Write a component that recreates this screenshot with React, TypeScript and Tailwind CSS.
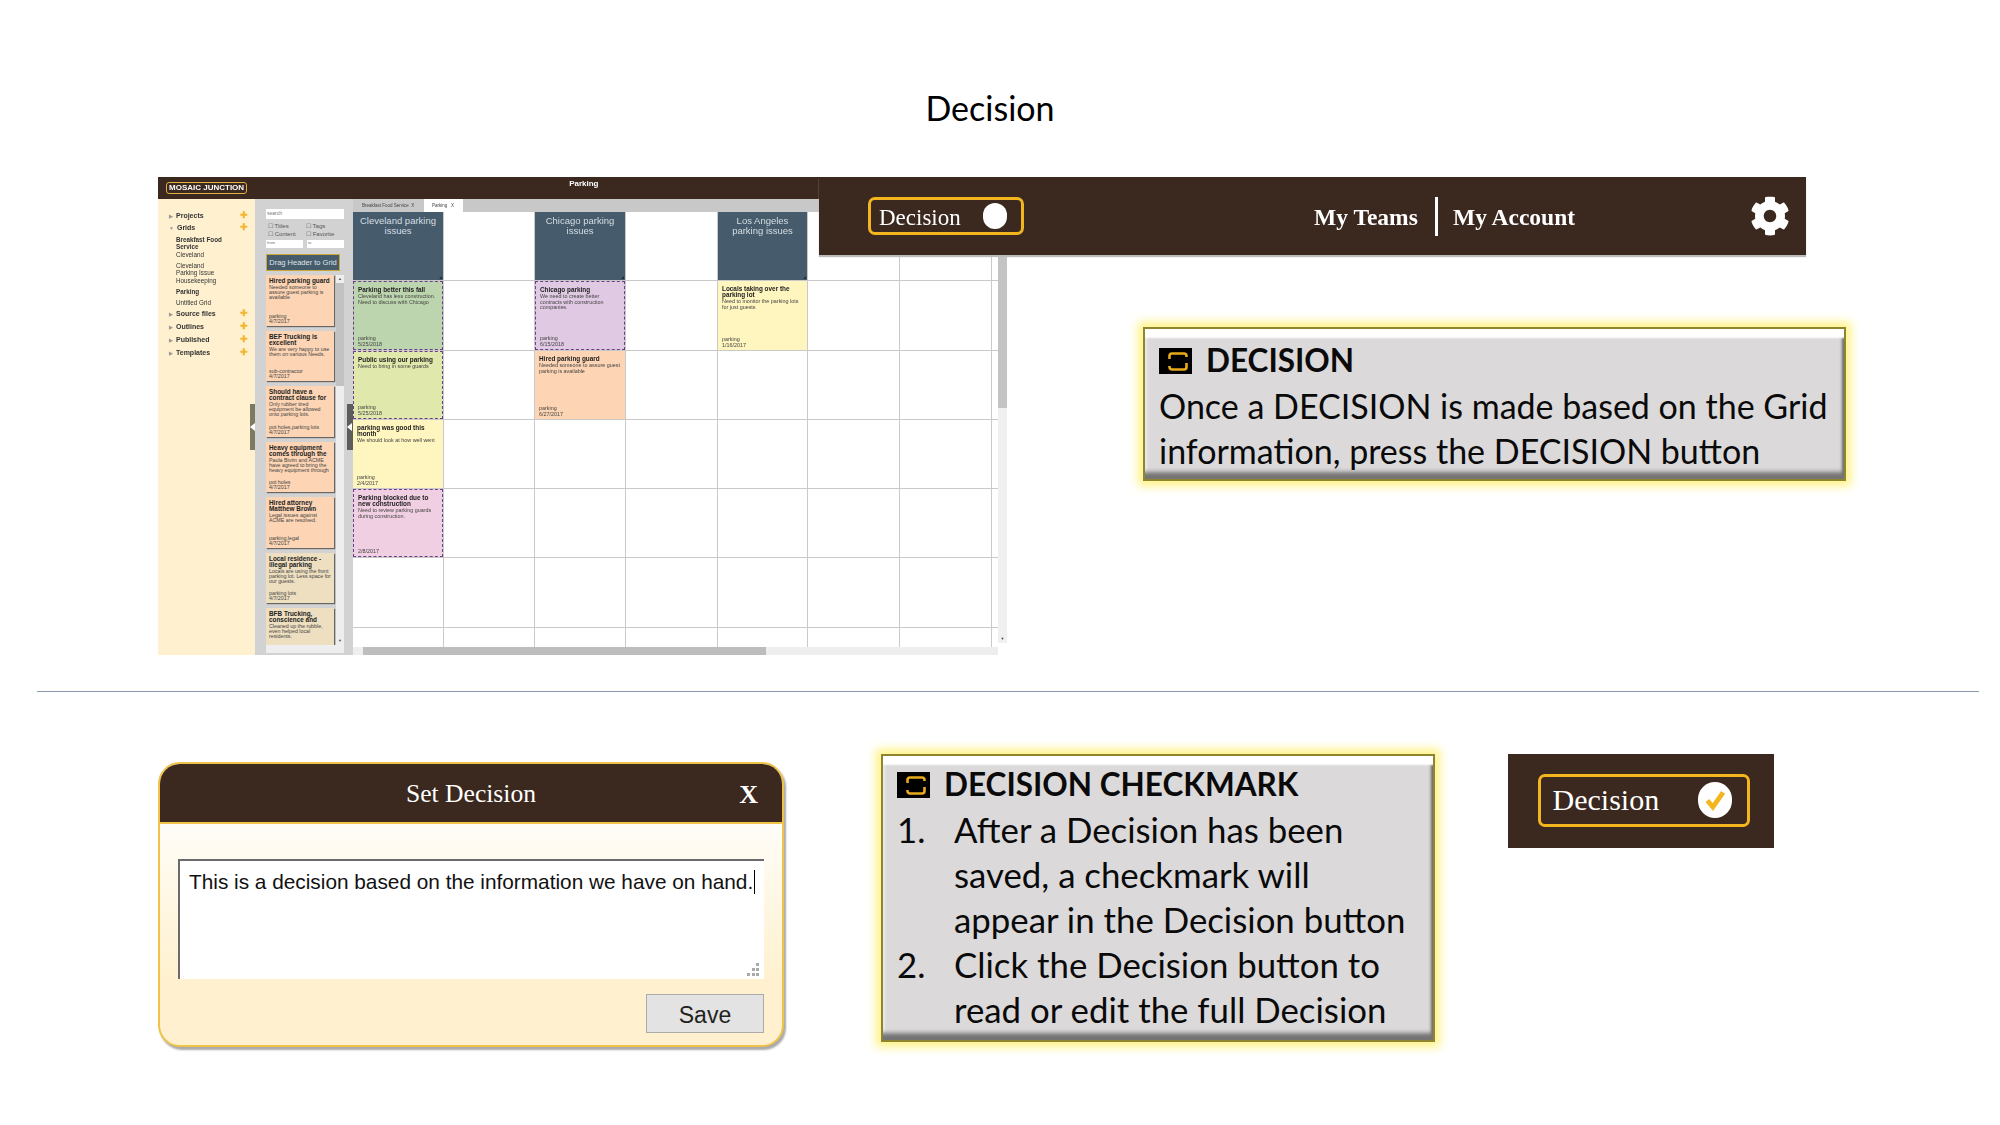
import type { ReactNode } from "react";
import { FaCog } from "react-icons/fa";

const sans = "font-['Liberation_Sans',sans-serif]";

const sideItems = [
  { label: "Projects", head: true, open: false, h: "h-[12px]" },
  { label: "Grids", head: true, open: true, h: "h-[12px]" },
  { label: "Breakfast Food Service", bold: true, h: "h-[15px]" },
  { label: "Cleveland", h: "h-[11px]" },
  { label: "Cleveland Parking Issue", h: "h-[15px]" },
  { label: "Housekeeping", h: "h-[11px]" },
  { label: "Parking", bold: true, h: "h-[11px]" },
  { label: "Untitled Grid", h: "h-[11px]" },
  { label: "Source files", head: true, h: "h-[13px]" },
  { label: "Outlines", head: true, h: "h-[13px]" },
  { label: "Published", head: true, h: "h-[13px]" },
  { label: "Templates", head: true, h: "h-[13px]" },
];

const listCards = [
  { title: "Hired parking guard", body: "Needed someone to assure guest parking is available", tag: "parking", date: "4/7/2017", bg: "bg-[#fdd5b4]" },
  { title: "BEF Trucking is excellent", body: "We are very happy to use them on various Needs.", tag: "sub-contractor", date: "4/7/2017", bg: "bg-[#fdd5b4]" },
  { title: "Should have a contract clause for", body: "Only rubber tired equipment be allowed onto parking lots.", tag: "pot holes,parking lots", date: "4/7/2017", bg: "bg-[#fdd5b4]" },
  { title: "Heavy equipment comes through the", body: "Paula Bivim and ACME have agreed to bring the heavy equipment through", tag: "pot holes", date: "4/7/2017", bg: "bg-[#fdd5b4]" },
  { title: "Hired attorney Matthew Brown", body: "Legal issues against ACME are resolved.", tag: "parking,legal", date: "4/7/2017", bg: "bg-[#fdd5b4]" },
  { title: "Local residence - illegal parking", body: "Locals are using the front parking lot. Less space for our guests.", tag: "parking lots", date: "4/7/2017", bg: "bg-[#eedfc0]" },
  { title: "BFB Trucking, conscience and", body: "Cleaned up the rubble, even helped local residents.", tag: "", date: "", bg: "bg-[#eedfc0]" },
];

type Note = { title: string; body: string; tag?: string; date: string; bg: string; dashed?: boolean };

const notes: Record<string, Note> = {
  "1-0": { title: "Parking better this fall", body: "Cleveland has less construction. Need to discuss with Chicago", tag: "parking", date: "5/25/2018", bg: "bg-[#bdd5ae]", dashed: true },
  "2-0": { title: "Public using our parking", body: "Need to bring in some guards", tag: "parking", date: "5/25/2018", bg: "bg-[#e0e8ab]", dashed: true },
  "3-0": { title: "parking was good this month", body: "We should look at how well went", tag: "parking", date: "2/4/2017", bg: "bg-[#fff5bf]" },
  "4-0": { title: "Parking blocked due to new construction", body: "Need to review parking guards during construction.", date: "2/8/2017", bg: "bg-[#f1cfe3]", dashed: true },
  "1-2": { title: "Chicago parking", body: "We need to create better contracts with construction companies.", tag: "parking", date: "6/15/2018", bg: "bg-[#e0c9e3]", dashed: true },
  "2-2": { title: "Hired parking guard", body: "Needed someone to assure guest parking is available", tag: "parking", date: "6/27/2017", bg: "bg-[#fdd5b4]" },
  "1-4": { title: "Locals taking over the parking lot", body: "Need to monitor the parking lots for just guests", tag: "parking", date: "1/16/2017", bg: "bg-[#fff5bf]" },
};

const headers: Record<number, string> = {
  0: "Cleveland parking issues",
  2: "Chicago parking issues",
  4: "Los Angeles parking issues",
};

const rowHeights = ["h-[69px]", "h-[70px]", "h-[69px]", "h-[69px]", "h-[69px]", "h-[70px]", "h-[19px]"];
const colWidths = [91, 91, 91, 92, 90, 92, 92, 6];

function DecisionButton({ done }: { done?: boolean }) {
  return (
    <div
      className={`flex h-full w-full items-center justify-between rounded-[7px] border-[3px] border-[#f3b61f] ${done ? "pl-[12px] pr-[15px]" : "pl-[8px] pr-[14px]"}`}
    >
      <span className={`font-['Liberation_Serif',serif] leading-none text-white ${done ? "text-[30px]" : "pt-[2px] text-[23px]"}`}>Decision</span>
      <span className={`flex items-center justify-center rounded-full bg-white blur-[0.5px] ${done ? "h-[36px] w-[34px]" : "h-[26px] w-[24px]"}`}>
        {done && (
          <svg viewBox="0 0 24 24" className="h-[26px] w-[26px]">
            <path d="M5 12.5l5 6L19.5 5" fill="none" stroke="#f3b61f" strokeWidth="4.5" />
          </svg>
        )}
      </span>
    </div>
  );
}

function DecisionIcon() {
  return (
    <svg viewBox="0 0 33 26" className="h-[26px] w-[33px] shrink-0">
      <rect width="33" height="26" fill="#000" />
      <path
        d="M10.5 11V8A2.5 2.5 0 0 1 13 5.5h12A2.5 2.5 0 0 1 27.5 8v1M27.5 15v4a2.5 2.5 0 0 1-2.5 2.5H13a2.5 2.5 0 0 1-2.5-2.5v-1"
        fill="none"
        stroke="#e8ab1a"
        strokeWidth="2.6"
      />
    </svg>
  );
}

function Callout({ className, children }: { className: string; children: ReactNode }) {
  return (
    <div
      className={`${className} shrink-0 border-[2px] border-[#8f8430] bg-[#dbd9da] font-['Lato',sans-serif] leading-[45px] text-[#0a0a0a] shadow-[inset_0_12px_2px_-3px_#fff,inset_0_-10px_4px_-3px_#747474,inset_-4px_0_3px_-2px_#666,inset_3px_0_2px_-1px_#eee,0_0_9px_5px_#fff385]`}
    >
      {children}
    </div>
  );
}

function AppShot() {
  return (
    <div className={`${sans} relative w-[849px] text-black`}>
      <div className="flex h-[22px] w-full items-center bg-[#3b281e] pl-[8px] blur-[0.3px]">
        <span className="rounded-[3px] border border-[#e0b040] px-[2px] text-[8px] font-bold leading-[10px] text-white">MOSAIC JUNCTION</span>
        <span className="ml-[322px] -translate-y-[4px] text-[8px] font-bold text-white">Parking</span>
      </div>

      <div className="flex h-[456px] blur-[0.35px]">
        <div className="flex w-[97px] shrink-0 flex-col bg-[#fff1cf] pt-[13px] leading-[7px] text-[#333]">
          {sideItems.map((item) => (
            <div
              key={item.label}
              className={`${item.h} flex w-full items-start ${item.head ? "pl-[11px] pr-[7px] text-[7px] font-bold" : "pl-[18px] pr-[32px] text-[6.3px]"} ${item.bold ? "font-bold" : ""}`}
            >
              {item.head && <span className="mr-[3px] mt-[1px] text-[5px] leading-[6px] text-[#999]">{item.open ? "▼" : "▶"}</span>}
              <span className="flex-1">{item.label}</span>
              {item.head && <span className="text-[9px] leading-[7px] text-[#f2b632]">✚</span>}
            </div>
          ))}
        </div>

        <div className="relative flex w-[98px] shrink-0 flex-col bg-[#d2d2d2] pl-[11px] pr-[9px] pt-[10px]">
          <div className="flex h-[10px] items-center bg-white pl-[1px] text-[5px] text-[#777]">search</div>
          <div className="mt-[3px] grid grid-cols-2 pl-[2px] text-[6px] leading-[8px] text-[#555]">
            <span>☐ Titles</span><span>☐ Tags</span><span>☐ Content</span><span>☐ Favorite</span>
          </div>
          <div className="mt-[2px] flex justify-between">
            <div className="h-[8px] w-[37px] bg-white pl-[1px] text-[4px] text-[#777]">from</div>
            <div className="h-[8px] w-[37px] bg-white pl-[1px] text-[4px] text-[#777]">to</div>
          </div>
          <div className="mt-[6px] flex h-[17px] w-[74px] items-center justify-center border border-[#c9a83a] bg-[#465b6b] text-[7.5px] text-[#dfe6ea]">Drag Header to Grid</div>

          <div className="mt-[4px] flex h-[370px] overflow-hidden">
            <div className="flex w-[68px] shrink-0 flex-col gap-[5px]">
              {listCards.map((card) => (
                <div key={card.title} className={`${card.bg} flex h-[50.5px] shrink-0 flex-col px-[3px] pt-[3px] text-[5.3px] leading-[5px] text-[#444] shadow-[1px_1px_1px_#666]`}>
                  <div className="text-[6.4px] font-bold leading-[6px] text-[#222]">{card.title}</div>
                  <div className="mt-[1px] flex-1">{card.body}</div>
                  <div>{card.tag}</div>
                  <div className="pb-[2px]">{card.date}</div>
                </div>
              ))}
            </div>
            <div className="ml-[2px] flex w-[8px] shrink-0 flex-col bg-[#eeeeee] text-center text-[4px] leading-[8px] text-[#555]">
              <div className="h-[8px]">▲</div>
              <div className="h-[103px] bg-[#c2c2c2]" />
              <div className="mt-auto h-[8px]">▼</div>
            </div>
          </div>
          <div className="h-[8px] w-[78px] bg-[#eeeeee]" />
          <div className="absolute -left-[5px] top-[205px] flex h-[46px] w-[5px] items-center bg-[#7d7a62]">
            <span className="h-0 w-0 border-y-[4px] border-r-[5px] border-y-transparent border-r-white" />
          </div>
          <div className="absolute right-0 top-[205px] flex h-[46px] w-[6px] items-center bg-[#5d5d5d]">
            <span className="h-0 w-0 border-y-[4px] border-r-[5px] border-y-transparent border-r-white" />
          </div>
        </div>

        <div className="flex w-[654px] shrink-0 flex-col">
          <div className="flex h-[13px] bg-[#c8c8c8] text-[4.5px] leading-[13px] text-[#444]">
            <span className="w-[71px] pl-[9px]">Breakfast Food Service &nbsp;X</span>
            <span className="w-[39px] bg-white pl-[8px]">Parking &nbsp;&nbsp;X</span>
          </div>
          <div className="flex h-[435px]">
            <div className="w-[645px] shrink-0">
              {rowHeights.map((rowHeight, row) => (
                <div key={row} className={`flex ${rowHeight}`}>
                  {colWidths.map((width, col) => {
                    const note = notes[`${row}-${col}`];
                    const head = row === 0 ? headers[col] : undefined;
                    return (
                      <div
                        key={col}
                        style={{ width }}
                        className={`shrink-0 border-[#c9c9c9] ${col < 7 ? "border-r" : ""} ${row < 6 ? "border-b" : ""}`}
                      >
                        {head && (
                          <div className="relative flex h-full w-full justify-center bg-[#465b6b] px-[5px] pt-[4px] text-center text-[9.5px] leading-[9.5px] text-[#d5dee3]">
                            {head}
                            <span className="absolute bottom-[1px] right-[1px] h-0 w-0 border-b-[3px] border-l-[3px] border-b-[#1f2d38] border-l-transparent" />
                          </div>
                        )}
                        {note && (
                          <div
                            className={`${note.bg} ${note.dashed ? "border-[1.5px] border-dashed border-[#6b3f8a]" : ""} flex h-full w-full flex-col px-[4px] pb-[2px] pt-[5px] text-[5.4px] leading-[5.5px] text-[#444]`}
                          >
                            <div className="text-[6.4px] font-bold leading-[6px] text-[#222]">{note.title}</div>
                            <div className="mt-[1px] flex-1">{note.body}</div>
                            {note.tag && <div>{note.tag}</div>}
                            <div>{note.date}</div>
                          </div>
                        )}
                      </div>
                    );
                  })}
                </div>
              ))}
            </div>
            <div className="flex h-[431px] w-[9px] flex-col bg-[#f0f0f0] text-center text-[4px] leading-[8px] text-[#444]">
              <div className="h-[43px]" />
              <div className="h-[153px] bg-[#c4c4c4]" />
              <div className="mt-auto h-[8px]">▼</div>
            </div>
          </div>
          <div className="flex h-[8px] w-[645px] items-center bg-[#eeeeee] pl-[10px]">
            <div className="h-full w-[403px] bg-[#bdbdbd]" />
          </div>
        </div>
      </div>

      <div className="absolute left-[661px] top-0 flex h-[78px] w-[987px] items-center bg-[#3b281e] pl-[49px] pr-[16px] shadow-[0_2px_1px_#bbb]">
        <div className="h-[38px] w-[156px]">
          <DecisionButton />
        </div>
        <div className="ml-[290px] flex items-center font-['Liberation_Serif',serif] text-[23.5px] font-bold leading-none text-white">
          <span className="w-[121px] pt-[3px]">My Teams</span>
          <span className="h-[39px] w-[3px] bg-white" />
          <span className="ml-[15px] pt-[3px]">My Account</span>
        </div>
        <FaCog className="ml-auto h-[40px] w-[40px] text-white" />
      </div>
    </div>
  );
}

export default function App() {
  return (
    <div className="h-[1125px] w-[2000px] overflow-hidden bg-white">
      <div className="flex h-[177px] justify-center pr-[20px] pt-[85px] font-['Lato',sans-serif] text-[34px] leading-[46px] text-black">
        Decision
      </div>

      <div className="flex h-[514px] items-start pl-[158px]">
        <AppShot />
        <Callout className="ml-[136px] mt-[150px] h-[154px] w-[703px] pl-[14px] pt-[9px] text-[34px]">
          <div className="flex items-center gap-[14px] text-[31.5px] font-bold">
            <DecisionIcon />
            DECISION
          </div>
          <div>
            Once a DECISION is made based on the Grid
            <br />
            information, press the DECISION button
          </div>
        </Callout>
      </div>

      <div className="ml-[37px] h-px w-[1942px] bg-[#8d97b0]" />

      <div className="flex items-start pl-[158px] pt-[62px]">
        <div className="mt-[8px] flex h-[285px] w-[626px] shrink-0 flex-col overflow-hidden rounded-[22px] border-[2px] border-[#efc24a] bg-[#fff1cf] shadow-[2px_3px_2px_#aaa]">
          <div className="relative flex h-[60px] shrink-0 items-center justify-center border-b-[2px] border-[#efc24a] bg-[#3b281e] pt-[3px] font-['Liberation_Serif',serif] text-[25.6px] text-white">
            <span>Set Decision</span>
            <span className="absolute right-[24px] text-[26px] font-bold">X</span>
          </div>
          <div className="bg-gradient-to-b from-[#fffdf8] to-[#fff1cf] px-[18px] pt-[35px]">
            <div className={`${sans} relative h-[120px] whitespace-nowrap border-l-2 border-t-2 border-[#6b6b6b] bg-white pl-[9px] pt-[4px] text-[20.8px] leading-[26px] text-[#111]`}>
              This is a decision based on the information we have on hand.
              <span className="ml-[1px] inline-block h-[24px] w-[1px] translate-y-[5px] bg-black" />
              <svg viewBox="0 0 13 13" className="absolute bottom-[3px] right-[4px] h-[13px] w-[13px] fill-[#aaa]">
                <rect x="9" y="0" width="3" height="3" />
                <rect x="5" y="5" width="3" height="3" />
                <rect x="9" y="5" width="3" height="3" />
                <rect x="0" y="10" width="3" height="3" />
                <rect x="5" y="10" width="3" height="3" />
                <rect x="9" y="10" width="3" height="3" />
              </svg>
            </div>
          </div>
          <div className="flex flex-1 justify-end px-[18px] pt-[15px]">
            <div className={`${sans} flex h-[39px] w-[118px] items-center justify-center border border-[#aaa] bg-[#e3e3e3] pt-[4px] text-[23px] text-[#222]`}>Save</div>
          </div>
        </div>

        <Callout className="ml-[97px] h-[288px] w-[554px] pl-[14px] pt-[6px] text-[34.8px]">
          <div className="flex items-center gap-[14px] text-[31.5px] font-bold">
            <DecisionIcon />
            DECISION CHECKMARK
          </div>
          <ol>
            <li className="flex">
              <span className="w-[57px] shrink-0">1.</span>
              <span>
                After a Decision has been
                <br />
                saved, a checkmark will
                <br />
                appear in the Decision button
              </span>
            </li>
            <li className="flex">
              <span className="w-[57px] shrink-0">2.</span>
              <span>
                Click the Decision button to
                <br />
                read or edit the full Decision
              </span>
            </li>
          </ol>
        </Callout>

        <div className="ml-[73px] flex h-[94px] w-[266px] shrink-0 items-center justify-center bg-[#3b281e] pb-[2px] pl-[5px]">
          <div className="h-[53px] w-[212px]">
            <DecisionButton done />
          </div>
        </div>
      </div>
    </div>
  );
}
